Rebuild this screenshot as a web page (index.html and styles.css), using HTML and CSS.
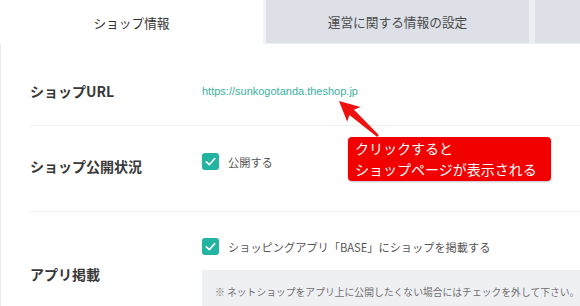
FILE: index.html
```html
<html>
<head>
  <title>ショップ情報</title>
  <meta charset="utf-8">
  <meta name="viewport" content="width=device-width, initial-scale=1">
<link rel="stylesheet" href="styles.css">
</head>
<body>

<div class="page">

  <!-- tabs -->
  <div class="tabs">
    <div class="tab tab-active">ショップ情報</div>
    <div class="tab-gap"></div>
    <div class="tab">運営に関する情報の設定</div>
    <div class="tab-gap tab-gap-wide"></div>
    <div class="tab tab-rest"></div>
  </div>

  <div class="rows">
    <div class="row row-url">
      <div class="label">ショップURL</div>
      <div class="value"><a class="shop-link" href="#">https://sunkogotanda.theshop.jp</a></div>
    </div>

    <div class="row">
      <div class="label label-up">ショップ公開状況</div>
      <div class="value value-public">
        <label class="check">
          <svg class="box" width="17" height="17" viewBox="0 0 17 17"><rect width="17" height="17" rx="3" fill="#22b4a0"/><polyline points="4.3,8.8 7.3,11.7 12.7,5.6" fill="none" stroke="#fff" stroke-width="1.6" stroke-linecap="round" stroke-linejoin="round"/></svg>
          <span>公開する</span>
        </label>
      </div>
    </div>

    <div class="row row-last">
      <div class="label label-up">アプリ掲載</div>
      <div class="value value-app">
        <label class="check">
          <svg class="box" width="17" height="17" viewBox="0 0 17 17"><rect width="17" height="17" rx="3" fill="#22b4a0"/><polyline points="4.3,8.8 7.3,11.7 12.7,5.6" fill="none" stroke="#fff" stroke-width="1.6" stroke-linecap="round" stroke-linejoin="round"/></svg>
          <span>ショッピングアプリ「BASE」にショップを掲載する</span>
        </label>
        <div class="notice">※ ネットショップをアプリ上に公開したくない場合にはチェックを外して下さい。</div>
      </div>
    </div>
  </div>

  <!-- annotation -->
  <svg class="arrow" width="580" height="306" viewBox="0 0 580 306">
    <polygon points="339,101 360.6,107 354,109.8 378.8,135.1 377.2,136.9 349.4,115 347.2,121.8" fill="#f01010"/>
  </svg>
  <div class="callout">クリックすると<br>ショップページが表示される</div>

</div>

</body>
</html>
```

FILE: styles.css
```css
* {
  box-sizing: border-box;
}

body {
  margin: 0;
  background: #fff;
  font-family: "Noto Sans CJK JP", "Noto Sans", sans-serif;
  color: #333;
  overflow: hidden;
}

.page {
  position: relative;
  width: 580px;
  height: 306px;
  overflow: hidden;
}

/* tabs */
.tabs {
  display: flex;
  height: 44px;
}

.tab {
  width: 263px;
  flex: none;
  display: flex;
  align-items: center;
  justify-content: center;
  font-size: 12.7px;
  color: #4a4a4a;
  background: #dde0e7;
  border-bottom: 1px solid #eceef2;
}

.tab-active {
  background: #fff;
  color: #333;
  border-bottom: none;
}

.tab-rest {
  flex: 1;
  width: auto;
}

.tab-gap {
  width: 3px;
  background: #f1f2f5;
}

.tab-gap-wide {
  width: 6px;
  background: #eef0f4;
}

/* rows */
.rows {
  border-left: 1px solid #ebebeb;
}

.row {
  display: grid;
  grid-template-columns: 172px 1fr;
  margin-left: 29px;
  border-bottom: 1px solid #efefef;
}

.row-last {
  border-bottom: none;
}

.label {
  align-self: center;
  font-size: 14px;
  font-weight: bold;
  color: #383838;
  line-height: 20px;
}

.label-up {
  padding-bottom: 5px;
}

.row-url {
  padding: 37px 0 24px;
}

.row-url .value {
  line-height: 20px;
}

.shop-link {
  font-family: "Liberation Sans", Arial, sans-serif;
  font-size: 11px;
  color: #3cb0a2;
  text-decoration: none;
}

.value-public {
  padding: 27px 0 41px;
}

.value-app {
  padding: 26px 0 24px;
}

.check {
  display: flex;
  align-items: center;
  gap: 9px;
  height: 17px;
  font-size: 11.2px;
  color: #555;
}

.box {
  flex: none;
}

.notice {
  margin-top: 15px;
  background: #eff0f3;
  padding: 15px 14px 17px 13px;
  font-size: 9.8px;
  line-height: 14px;
  color: #6f6f6f;
  white-space: nowrap;
  width: 420px;
}

/* annotation over the page */
.arrow {
  position: absolute;
  left: 0;
  top: 0;
}

.callout {
  position: absolute;
  left: 348px;
  top: 137px;
  width: 203px;
  height: 44px;
  padding: 1px 0 0 7px;
  background: #f20000;
  border-radius: 4px;
  box-shadow: 0 1px 2px rgba(0, 0, 0, 0.25);
  color: #fff;
  font-size: 14px;
  line-height: 20.5px;
}
```
